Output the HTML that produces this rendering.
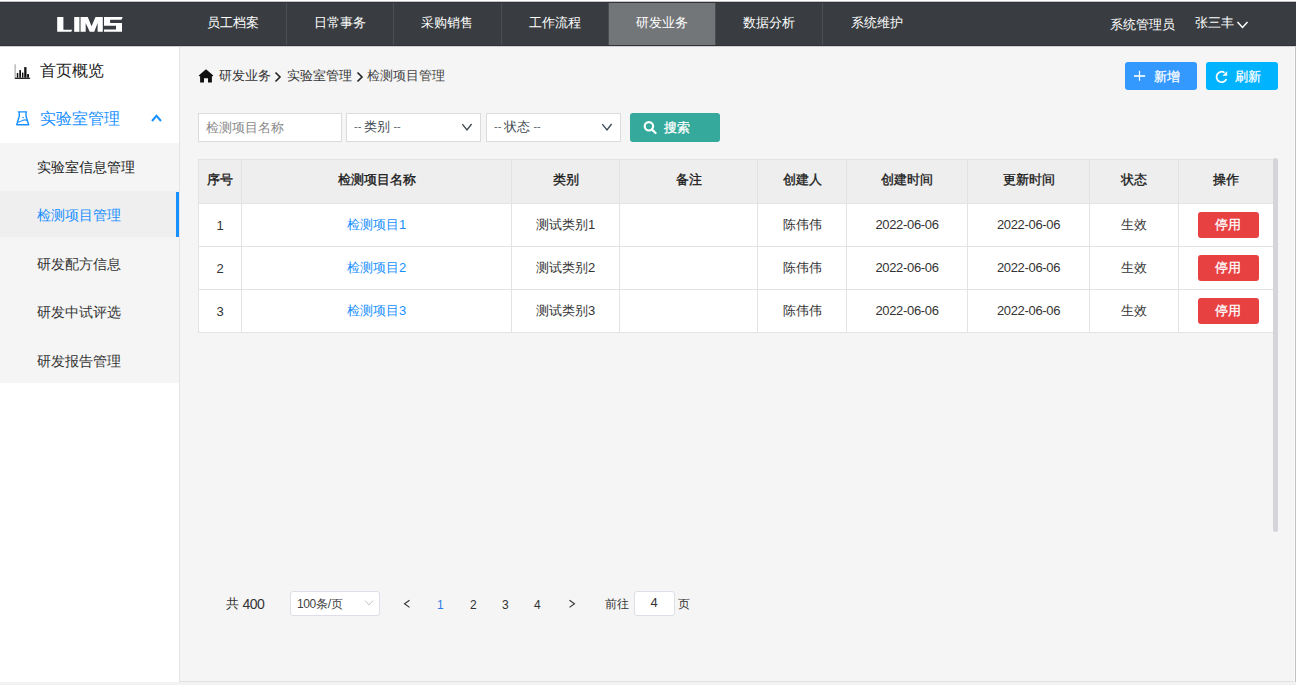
<!DOCTYPE html>
<html><head><meta charset="utf-8">
<style>
*{margin:0;padding:0;box-sizing:border-box;}
html,body{width:1296px;height:685px;overflow:hidden;background:#f2f2f2;font-family:"Liberation Sans",sans-serif;}
.abs{position:absolute;}
#top{position:absolute;left:0;top:0;width:1296px;height:2px;background:#fff;border-bottom:1px solid #c4c5c6;}
#hsh{position:absolute;left:0;top:46px;width:1296px;height:1px;background:#cfd0d1;z-index:5;}
#hdr{position:absolute;left:0;top:2px;width:1296px;height:44px;background:#393d41;border-top:1px solid #2f3337;border-bottom:1px solid #2f3337;}
.nav{position:absolute;top:0;height:42px;width:107px;color:#fff;font-size:13px;line-height:40px;text-align:center;border-right:1px solid #4a4e52;}
.nav.act{background:#737679;}
#side{position:absolute;left:0;top:46px;width:179px;height:636px;background:#fff;}
#sideb{position:absolute;left:179px;top:46px;width:1px;height:636px;background:#e4e4e4;}
#main{position:absolute;left:180px;top:46px;width:1114px;height:635px;background:#f5f5f5;}
#rb{position:absolute;left:1294px;top:46px;width:2px;height:636px;background:#c2c2c2;border-left:1px solid #f8f8f8;}
#bb{position:absolute;left:180px;top:681px;width:1114px;height:1px;background:#e2e2e2;}
.t{position:absolute;white-space:nowrap;}
.sub{position:absolute;left:0;width:179px;height:48px;background:#f5f5f5;}
table{position:absolute;left:198px;top:159px;border-collapse:collapse;background:#fff;table-layout:fixed;}
td,th{border:1px solid #e3e3e3;text-align:center;font-size:13px;color:#333;height:43px;padding:0;}
th{background:#eeeeee;height:44px;font-weight:normal;color:#1a1a1a;-webkit-text-stroke:0.35px #1a1a1a;padding-bottom:3px;}
td a{color:#1890ff;text-decoration:none;}
.n{letter-spacing:-0.33px;position:relative;top:-1px;}
.stop{display:inline-block;position:relative;left:2px;width:61px;height:26px;line-height:26px;background:#e84142;color:#fff;border-radius:3px;font-size:13px;-webkit-text-stroke:0.3px #fff;}
.dd{font-size:11px;color:#5a6268;position:relative;top:-1px;}
.btn{position:absolute;height:28px;border-radius:3px;color:#fff;font-size:13px;}
.inp{position:absolute;background:#fff;border:1px solid #dcdcdc;}
</style></head><body>
<div id="top"></div>
<div id="hdr">
  <svg class="abs" style="left:0;top:-3px" width="140" height="46" viewBox="0 0 140 46">
    <polygon fill="#fff" points="57.2,17 63.4,17 63.4,29.7 72.3,29.7 71.2,31.8 57.2,31.8"/>
    <rect fill="#fff" x="74.2" y="17" width="5.3" height="14.8"/>
    <rect fill="#8a8d90" x="79.5" y="17" width="1.3" height="14.8"/>
    <polygon fill="#fff" points="80.8,17 87.8,17 91.5,26.3 95.5,17 102.8,17 102.8,31.8 97.6,31.8 97.6,22.9 94.3,31.8 89.7,31.8 85.7,22.9 85.7,31.8 80.8,31.8"/>
    <polygon fill="#fff" points="104,17 122.7,17 121.5,19.8 110.1,19.8 110.1,22.9 122,22.9 122,31.8 104,31.8 104,29.6 116,29.6 116,25.7 104,25.7"/>
  </svg>
  <div class="nav" style="left:180.0px;width:107.2px">员工档案</div>
  <div class="nav" style="left:287.2px;width:107.2px">日常事务</div>
  <div class="nav" style="left:394.4px;width:107.2px">采购销售</div>
  <div class="nav" style="left:501.6px;width:107.2px">工作流程</div>
  <div class="nav act" style="left:608.8px;width:107.2px">研发业务</div>
  <div class="nav" style="left:716.0px;width:107.2px">数据分析</div>
  <div class="nav" style="left:823.2px;width:107.2px;border-right:none">系统维护</div>
  <div class="t" style="left:1110px;top:13px;color:#fff;font-size:13px">系统管理员</div>
  <div class="t" style="left:1195px;top:11px;color:#fff;font-size:13px">张三丰</div>
  <svg class="abs" style="left:1234.5px;top:14.7px" width="16" height="12"><polyline points="2.5,4 7.5,9.5 12.5,4" fill="none" stroke="#fff" stroke-width="1.5"/></svg>
</div>

<div id="side">
  <svg class="abs" style="left:14px;top:18px" width="17" height="16" viewBox="0 0 17 16">
    <rect x="0.4" y="0.3" width="1.5" height="14.2" fill="#bbb"/>
    <rect x="0.9" y="13.7" width="15.2" height="1.2" fill="#111"/>
    <rect x="2.8" y="9" width="1.5" height="4.7" fill="#111"/>
    <rect x="5.3" y="6.1" width="1.7" height="7.6" fill="#111"/>
    <rect x="8" y="8.6" width="1.4" height="5.1" fill="#111"/>
    <rect x="10.2" y="3.1" width="2.3" height="10.6" fill="#111"/>
    <rect x="13.1" y="10.1" width="1.9" height="3.6" fill="#111"/>
  </svg>
  <div class="t" style="left:40px;top:15px;font-size:16px;color:#222">首页概览</div>
  <svg class="abs" style="left:14px;top:63px" width="18" height="18" viewBox="0 0 18 18">
    <path d="M3.8,2.9 H13.1 M5.3,2.9 V7 L2.7,15.7 H14.7 L12,7 V2.9" fill="none" stroke="#1890ff" stroke-width="1.4" stroke-linejoin="round"/>
    <path d="M3.7,12.8 C5.5,13.6 7,12 9,11.3 C10.5,10.8 12,10.8 13.2,11.4" fill="none" stroke="#1890ff" stroke-width="1.1"/>
    <circle cx="9.1" cy="8.5" r="0.75" fill="#1890ff"/>
  </svg>
  <div class="t" style="left:40px;top:62.5px;font-size:16px;color:#1890ff">实验室管理</div>
  <svg class="abs" style="left:150px;top:67px" width="14" height="10"><polyline points="2,8 6.5,2.8 11,8" fill="none" stroke="#1890ff" stroke-width="2"/></svg>
  <div class="sub" style="top:97px"></div>
  <div class="sub" style="top:145px;background:#efefef;height:46px"></div>
  <div class="abs" style="left:176px;top:146px;width:3px;height:45px;background:#1890ff"></div>
  <div class="sub" style="top:191px"></div>
  <div class="sub" style="top:239px"></div>
  <div class="sub" style="top:287px;height:50px"></div>
  <div class="t" style="left:37px;top:112px;font-size:14.3px;color:#222">实验室信息管理</div>
  <div class="t" style="left:37px;top:160px;font-size:14.3px;color:#1890ff">检测项目管理</div>
  <div class="t" style="left:37px;top:209px;font-size:14.3px;color:#333">研发配方信息</div>
  <div class="t" style="left:37px;top:257px;font-size:14.3px;color:#333">研发中试评选</div>
  <div class="t" style="left:37px;top:306px;font-size:14.3px;color:#333">研发报告管理</div>
</div>
<div id="sideb"></div>
<div id="main"></div>
<div id="rb"></div>
<div id="bb"></div>
<div id="hsh"></div>

<!-- breadcrumb -->
<svg class="abs" style="left:198px;top:68px" width="16" height="16" viewBox="0 0 16 16">
  <path d="M8,1.2 L15.3,7.4 L14.2,8.5 L13.9,8.2 V14.6 H10 V10.3 H6 V14.6 H2.1 V8.2 L1.8,8.5 L0.7,7.4 Z" fill="#111"/>
</svg>
<div class="t" style="left:219px;top:67.8px;font-size:12.7px;color:#333">研发业务</div>
<svg class="abs" style="left:274px;top:71px" width="8" height="12"><polyline points="1.5,1.5 6,6 1.5,10.5" fill="none" stroke="#222" stroke-width="1.6"/></svg>
<div class="t" style="left:287px;top:67.8px;font-size:12.7px;color:#333">实验室管理</div>
<svg class="abs" style="left:355.5px;top:71px" width="8" height="12"><polyline points="1.5,1.5 6,6 1.5,10.5" fill="none" stroke="#222" stroke-width="1.6"/></svg>
<div class="t" style="left:367px;top:67.8px;font-size:12.7px;color:#444">检测项目管理</div>

<!-- top buttons -->
<div class="btn" style="left:1125px;top:62px;width:72px;background:#3399ff"></div>
<svg class="abs" style="left:1133px;top:70px" width="13" height="12"><rect x="5.9" y="0.8" width="1.2" height="10" fill="#fff"/><rect x="1" y="5.2" width="11.2" height="1.6" fill="#fff"/></svg>
<div class="t" style="left:1154px;top:68px;font-size:13px;color:#fff;-webkit-text-stroke:0.25px #fff">新增</div>
<div class="btn" style="left:1206px;top:62px;width:72px;background:#00b3ff"></div>
<svg class="abs" style="left:1214px;top:70px" width="15" height="15" viewBox="0 0 15 15">
  <path d="M12.4,9.2 A5.2,5.2 0 1 1 10.6,2.6" fill="none" stroke="#fff" stroke-width="1.7"/>
  <polygon points="13.2,1 13.2,5.7 8.4,5.7" fill="#fff"/>
</svg>
<div class="t" style="left:1235px;top:68px;font-size:13px;color:#fff;-webkit-text-stroke:0.25px #fff">刷新</div>

<!-- search row -->
<div class="inp" style="left:198px;top:113px;width:144px;height:29px"></div>
<div class="t" style="left:205.5px;top:118.7px;font-size:13px;color:#8a8a8a">检测项目名称</div>
<div class="inp" style="left:346px;top:113px;width:135px;height:29px"></div>
<div class="t" style="left:354px;top:117.5px;font-size:13px;color:#3e4850"><span class="dd">-- </span>类别<span class="dd"> --</span></div>
<svg class="abs" style="left:460px;top:122px" width="14" height="10"><polyline points="2.3,2.2 7,8 11.6,2" fill="none" stroke="#3a4650" stroke-width="1.3"/></svg>
<div class="inp" style="left:486px;top:113px;width:135px;height:29px"></div>
<div class="t" style="left:494px;top:117.5px;font-size:13px;color:#3e4850"><span class="dd">-- </span>状态<span class="dd"> --</span></div>
<svg class="abs" style="left:600px;top:122px" width="14" height="10"><polyline points="2.3,2.2 7,8 11.6,2" fill="none" stroke="#3a4650" stroke-width="1.3"/></svg>
<div class="btn" style="left:630px;top:113px;width:90px;height:29px;background:#34a99c"></div>
<svg class="abs" style="left:638px;top:117px" width="24" height="22" viewBox="0 0 24 22">
  <circle cx="10.9" cy="9.3" r="4.2" fill="none" stroke="#fff" stroke-width="2.2"/>
  <line x1="14" y1="12.6" x2="17.6" y2="16" stroke="#fff" stroke-width="2.2" stroke-linecap="round"/>
</svg>
<div class="t" style="left:664px;top:119px;font-size:13px;color:#fff;-webkit-text-stroke:0.3px #fff">搜索</div>

<!-- table -->
<table>
<colgroup><col style="width:43px"><col style="width:270px"><col style="width:108px"><col style="width:138px"><col style="width:89px"><col style="width:121px"><col style="width:122px"><col style="width:89px"><col style="width:95px"></colgroup>
<tr><th>序号</th><th>检测项目名称</th><th>类别</th><th>备注</th><th>创建人</th><th>创建时间</th><th>更新时间</th><th>状态</th><th>操作</th></tr>
<tr><td>1</td><td><a>检测项目1</a></td><td>测试类别1</td><td></td><td>陈伟伟</td><td><span class="n">2022-06-06</span></td><td><span class="n">2022-06-06</span></td><td>生效</td><td><span class="stop">停用</span></td></tr>
<tr><td>2</td><td><a>检测项目2</a></td><td>测试类别2</td><td></td><td>陈伟伟</td><td><span class="n">2022-06-06</span></td><td><span class="n">2022-06-06</span></td><td>生效</td><td><span class="stop">停用</span></td></tr>
<tr><td>3</td><td><a>检测项目3</a></td><td>测试类别3</td><td></td><td>陈伟伟</td><td><span class="n">2022-06-06</span></td><td><span class="n">2022-06-06</span></td><td>生效</td><td><span class="stop">停用</span></td></tr>
</table>
<div class="abs" style="left:1273px;top:158px;width:5px;height:374px;border-radius:3px;background:#d4d4da"></div>

<!-- pagination -->
<div class="t" style="left:226px;top:595px;font-size:13px;color:#333">共<span style="font-size:14px;letter-spacing:-0.5px;position:relative;top:0.5px"> 400</span></div>
<div class="abs" style="left:290px;top:591px;width:90px;height:25px;background:#fff;border:1px solid #dcdfe6;border-radius:3px"></div>
<div class="t" style="left:297px;top:596px;font-size:12px;color:#444"><span style="letter-spacing:-0.4px">100</span>条/页</div>
<svg class="abs" style="left:363px;top:598px" width="12" height="10"><polyline points="2,2.5 6,7 10,2.5" fill="none" stroke="#c0c4cc" stroke-width="1"/></svg>
<svg class="abs" style="left:401px;top:598px" width="12" height="12"><polyline points="8.5,2.2 3.5,5.8 8.5,9.4" fill="none" stroke="#333" stroke-width="1.1"/></svg>
<div class="t" style="left:437px;top:597.5px;font-size:12px;color:#2d7be5">1</div>
<div class="t" style="left:470px;top:597.5px;font-size:12px;color:#333">2</div>
<div class="t" style="left:502px;top:597.5px;font-size:12px;color:#333">3</div>
<div class="t" style="left:534px;top:597.5px;font-size:12px;color:#333">4</div>
<svg class="abs" style="left:566px;top:598px" width="12" height="12"><polyline points="3.5,2.2 8.5,5.8 3.5,9.4" fill="none" stroke="#333" stroke-width="1.1"/></svg>
<div class="t" style="left:605px;top:597px;font-size:11.5px;color:#333">前往</div>
<div class="abs" style="left:634px;top:591px;width:41px;height:25px;background:#fff;border:1px solid #dcdfe6;border-radius:3px"></div>
<div class="t" style="left:650.5px;top:594.7px;font-size:13px;color:#333">4</div>
<div class="t" style="left:678px;top:596px;font-size:12px;color:#333">页</div>

</body></html>
